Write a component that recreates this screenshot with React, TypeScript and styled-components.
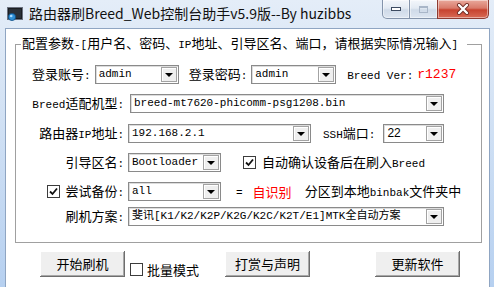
import React from "react";
import styled, { createGlobalStyle } from "styled-components";

const CJK = `"Noto Sans CJK SC", "Noto Sans", sans-serif`;
const MONO = `"Liberation Mono", "DejaVu Sans Mono", "Noto Sans CJK SC", monospace`;

const Global = createGlobalStyle`
  html, body { margin: 0; padding: 0; width: 494px; height: 287px; overflow: hidden; background: #fff; }
  #root { width: 494px; height: 287px; }
  * { box-sizing: border-box; }
`;

const Window = styled.div`
  width: 494px;
  height: 287px;
  display: flex;
  flex-direction: column;
  background: linear-gradient(to bottom, #e4edf8 0px, #d6e4f5 90px, #b6d0f0 287px);
  font-family: ${CJK};
  color: #000;
`;

const TitleBar = styled.div`
  height: 28px;
  flex: none;
  display: flex;
  align-items: flex-start;
  padding-left: 7px;
`;

const TitleIcon = styled.svg`
  margin-top: 6px;
  flex: none;
`;

const TitleText = styled.div`
  margin-left: 6px;
  font-size: 14px;
  line-height: 26px;
  white-space: nowrap;
  color: #111;
`;

const CaptionGroup = styled.div`
  margin-left: auto;
  margin-right: 5px;
  display: flex;
  height: 19px;
`;

const CapBtn = styled.div<{ $w: number; $kind: "min" | "max" | "close" }>`
  width: ${(p) => p.$w}px;
  height: 19px;
  margin-left: ${(p) => (p.$kind === "min" ? 0 : -1)}px;
  display: flex;
  align-items: center;
  justify-content: center;
  border: 1px solid ${(p) => (p.$kind === "close" ? "#8e3b32" : "#8494ab")};
  border-top: none;
  border-radius: ${(p) =>
    p.$kind === "min" ? "0 0 0 5px" : p.$kind === "close" ? "0 0 5px 0" : "0"};
  background: ${(p) =>
    p.$kind === "close"
      ? "linear-gradient(to bottom, #e9a99c 0%, #d97a6a 45%, #c7432f 55%, #d86b56 100%)"
      : "linear-gradient(to bottom, #f3f6fb 0%, #e3eaf3 45%, #cfdae8 55%, #dde6f1 100%)"};
  box-shadow: inset 0 0 0 1px rgba(255, 255, 255, 0.45);
`;

const FrameBody = styled.div`
  flex: 1;
  display: flex;
  padding: 0 4px 0 5px;
  min-height: 0;
`;

const Client = styled.div`
  flex: 1;
  background: #fff;
  border: 1px solid #8fa5c2;
  border-bottom: none;
  display: flex;
  flex-direction: column;
`;

const Group = styled.fieldset`
  margin: 7px 7px 0 9px;
  padding: 0 0 16px 0;
  border: 1px solid #a0a0a0;
  min-width: 0;
`;

const Legend = styled.legend`
  margin-left: 5px;
  padding: 0 9px 0 1px;
  font-size: 13px;
  line-height: 14px;
  white-space: nowrap;
`;

const Row = styled.div<{ $mt: number; $pl?: number }>`
  display: flex;
  align-items: center;
  height: 19px;
  margin-top: ${(p) => p.$mt}px;
  padding-left: ${(p) => p.$pl ?? 0}px;
`;

const LabelCell = styled.div`
  width: 108px;
  flex: none;
  display: flex;
  justify-content: flex-end;
  align-items: center;
  gap: 5px;
`;

const Label = styled.span<{ $ml?: number }>`
  font-size: 13px;
  line-height: 19px;
  white-space: nowrap;
  margin-left: ${(p) => p.$ml ?? 0}px;
`;

const Mono = styled.span<{ $size?: number }>`
  font-family: ${MONO};
  font-size: ${(p) => p.$size ?? 11}px;
`;

const RedText = styled.span<{ $ml?: number; $mono?: boolean }>`
  color: #ff0000;
  font-family: ${(p) => (p.$mono ? MONO : CJK)};
  font-size: 13px;
  line-height: 19px;
  white-space: nowrap;
  margin-left: ${(p) => p.$ml ?? 0}px;
`;

const ComboBox = styled.div<{ $w: number; $ml?: number }>`
  width: ${(p) => p.$w}px;
  height: 19px;
  flex: none;
  margin-left: ${(p) => p.$ml ?? 0}px;
  display: flex;
  align-items: stretch;
  border: 1px solid #8a8a8a;
  box-shadow: inset 1px 1px #dcdcdc;
  background: #fff;
  padding: 1px;
`;

const ComboText = styled.div<{ $sans?: boolean }>`
  flex: 1;
  padding-left: 2px;
  font-family: ${(p) => (p.$sans ? `"Liberation Sans", "Noto Sans", sans-serif` : MONO)};
  font-size: ${(p) => (p.$sans ? 12 : 11)}px;
  line-height: 15px;
  white-space: nowrap;
  overflow: hidden;
`;

const DropButton = styled.div`
  width: 16px;
  flex: none;
  display: flex;
  align-items: center;
  justify-content: center;
  background: #efefef;
  border: 1px solid #a3a3a3;
  box-shadow: inset 1px 1px #ffffff;
`;

const Arrow = styled.span`
  width: 0;
  height: 0;
  border-left: 4px solid transparent;
  border-right: 4px solid transparent;
  border-top: 4px solid #000;
`;

const Check = styled.span<{ $ml?: number }>`
  width: 13px;
  height: 13px;
  flex: none;
  margin-left: ${(p) => p.$ml ?? 0}px;
  border: 1px solid #3c3c3c;
  background: #fff;
  display: flex;
  align-items: center;
  justify-content: center;
`;

const BottomBar = styled.div`
  display: flex;
  align-items: flex-start;
  margin-top: 8px;
  padding-left: 34px;
`;

const PushButton = styled.button<{ $ml?: number }>`
  width: 85px;
  height: 26px;
  flex: none;
  margin: 0 0 0 ${(p) => p.$ml ?? 0}px;
  padding: 0;
  border: none;
  background: #efefef;
  box-shadow: inset -1px -1px #6e6e6e, inset 1px 1px #ffffff, inset -2px -2px #a8a8a8;
  font-family: ${CJK};
  font-size: 13px;
  line-height: 24px;
  color: #000;
`;

const CheckLabel = styled.div<{ $ml?: number }>`
  display: flex;
  align-items: center;
  gap: 4px;
  margin: 11px 0 0 ${(p) => p.$ml ?? 0}px;
  height: 15px;
`;

const Mixed: React.FC<{ text: string }> = ({ text }) => {
  const parts = text.split(/([\x20-\x7e]+)/).filter(Boolean);
  return (
    <>
      {parts.map((s, i) =>
        /^[\x20-\x7e]+$/.test(s) ? <Mono key={i}>{s}</Mono> : <span key={i}>{s}</span>
      )}
    </>
  );
};

const Combo: React.FC<{ w: number; ml?: number; value: React.ReactNode; sans?: boolean }> = ({
  w,
  ml,
  value,
  sans,
}) => (
  <ComboBox $w={w} $ml={ml}>
    <ComboText $sans={sans}>{value}</ComboText>
    <DropButton>
      <Arrow />
    </DropButton>
  </ComboBox>
);

const CheckBox: React.FC<{ checked?: boolean; ml?: number }> = ({ checked, ml }) => (
  <Check $ml={ml}>
    {checked && (
      <svg width="9" height="9" viewBox="0 0 9 9">
        <polyline points="1,4.5 3.5,7 8,1.5" fill="none" stroke="#111" strokeWidth="1.8" />
      </svg>
    )}
  </Check>
);

export default function App() {
  return (
    <>
      <Global />
      <Window>
        <TitleBar>
          <TitleIcon width="16" height="16" viewBox="0 0 16 16">
            <rect x="0.5" y="1.5" width="15" height="12" fill="#1b1e22" stroke="#6b7280" />
            <rect x="2" y="3" width="12" height="9" fill="#2a3038" />
            <circle cx="5" cy="11" r="3.6" fill="#2f8fd6" stroke="#0f4f86" strokeWidth="0.8" />
            <circle cx="4.2" cy="10" r="1.3" fill="#a9dcff" />
          </TitleIcon>
          <TitleText>路由器刷Breed_Web控制台助手v5.9版--By huzibbs</TitleText>
          <CaptionGroup>
            <CapBtn $w={28} $kind="min">
              <svg width="12" height="6" viewBox="0 0 12 6">
                <rect x="1.5" y="1.5" width="9" height="3" fill="#fff" stroke="#3d4b61" />
              </svg>
            </CapBtn>
            <CapBtn $w={29} $kind="max">
              <svg width="11" height="9" viewBox="0 0 11 9">
                <rect x="1.5" y="1.5" width="8" height="6" fill="none" stroke="#a9b6c8" strokeWidth="1" />
                <rect x="1.5" y="1.5" width="8" height="1.5" fill="#a9b6c8" />
              </svg>
            </CapBtn>
            <CapBtn $w={52} $kind="close">
              <svg width="14" height="12" viewBox="0 0 14 12">
                <path d="M3 2 L11 10 M11 2 L3 10" stroke="#6e2a22" strokeWidth="4" strokeLinecap="round" />
                <path d="M3 2 L11 10 M11 2 L3 10" stroke="#fff" strokeWidth="2.4" strokeLinecap="round" />
              </svg>
            </CapBtn>
          </CaptionGroup>
        </TitleBar>
        <FrameBody>
          <Client>
            <Group>
              <Legend>
                <Mixed text="配置参数-[用户名、密码、IP地址、引导区名、端口，请根据实际情况输入]" />
              </Legend>

              <Row $mt={13} $pl={16}>
                <Label>
                  <Mixed text="登录账号:" />
                </Label>
                <Combo w={84} ml={4} value="admin" />
                <Label $ml={10}>
                  <Mixed text="登录密码:" />
                </Label>
                <Combo w={85} ml={4} value="admin" />
                <Label $ml={11}>
                  <Mono>Breed Ver:</Mono>
                </Label>
                <RedText $mono $ml={4}>
                  r1237
                </RedText>
              </Row>

              <Row $mt={10}>
                <LabelCell>
                  <Label>
                    <Mixed text="Breed适配机型:" />
                  </Label>
                </LabelCell>
                <Combo w={314} ml={6} value="breed-mt7620-phicomm-psg1208.bin" />
              </Row>

              <Row $mt={11}>
                <LabelCell>
                  <Label>
                    <Mixed text="路由器IP地址:" />
                  </Label>
                </LabelCell>
                <Combo w={183} ml={4} value="192.168.2.1" />
                <Label $ml={12}>
                  <Mixed text="SSH端口:" />
                </Label>
                <Combo w={61} ml={8} value="22" sans />
              </Row>

              <Row $mt={10}>
                <LabelCell>
                  <Label>
                    <Mixed text="引导区名:" />
                  </Label>
                </LabelCell>
                <Combo w={93} ml={4} value="Bootloader" />
                <CheckBox checked ml={22} />
                <Label $ml={6}>
                  <Mixed text="自动确认设备后在刷入Breed" />
                </Label>
              </Row>

              <Row $mt={10}>
                <LabelCell>
                  <CheckBox checked />
                  <Label>
                    <Mixed text="尝试备份:" />
                  </Label>
                </LabelCell>
                <Combo w={93} ml={4} value="all" />
                <Label $ml={15}>
                  <Mono>=</Mono>
                </Label>
                <RedText $ml={10}>自识别</RedText>
                <Label $ml={13}>
                  <Mixed text="分区到本地binbak文件夹中" />
                </Label>
              </Row>

              <Row $mt={6}>
                <LabelCell>
                  <Label>
                    <Mixed text="刷机方案:" />
                  </Label>
                </LabelCell>
                <Combo
                  w={316}
                  ml={4}
                  value={<Mixed text="斐讯[K1/K2/K2P/K2G/K2C/K2T/E1]MTK全自动方案" />}
                />
              </Row>
            </Group>

            <BottomBar>
              <PushButton>开始刷机</PushButton>
              <CheckLabel $ml={5}>
                <CheckBox />
                <Label>批量模式</Label>
              </CheckLabel>
              <PushButton $ml={26}>打赏与声明</PushButton>
              <PushButton $ml={65}>更新软件</PushButton>
            </BottomBar>
          </Client>
        </FrameBody>
      </Window>
    </>
  );
}
